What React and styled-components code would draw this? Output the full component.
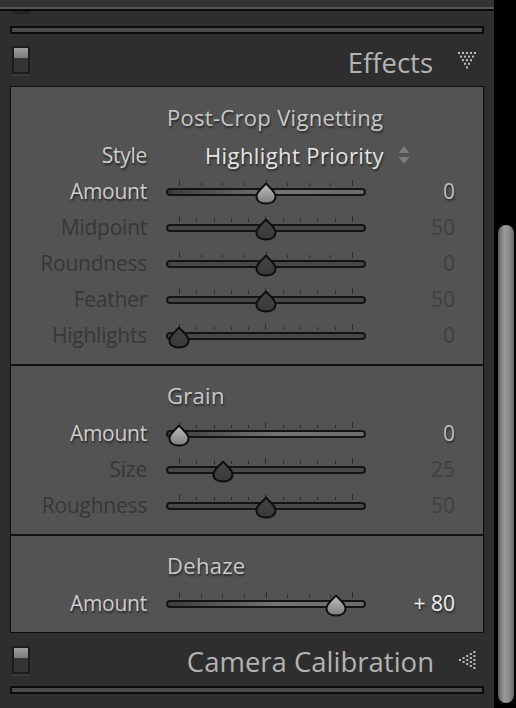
import React from "react";
import styled, { createGlobalStyle } from "styled-components";

const GlobalStyle = createGlobalStyle`
  html, body {
    margin: 0;
    padding: 0;
    background: #000;
  }
  body {
    font-family: "Open Sans", "Noto Sans", sans-serif;
  }
`;

const Page = styled.div`
  width: 516px;
  height: 708px;
  display: flex;
  overflow: hidden;
  background: #2e2e2e;
`;

const Main = styled.div`
  width: 494px;
  display: flex;
  flex-direction: column;
`;

const TopStrip = styled.div`
  height: 7px;
  background: #333;
  border-bottom: 2px solid #575757;
  box-shadow: 0 2px 0 #0a0a0a;
`;

const Stub = styled.div`
  width: 18px;
  height: 3px;
  margin: 2px 0 0 12px;
  background: #222;
`;

const Divider = styled.div`
  height: 4px;
  margin: ${({ $top }) => $top}px 10px 0 10px;
  background: #4a4a4a;
  border: 2px solid #0c0c0c;
`;

const Header = styled.div`
  height: ${({ $h }) => $h}px;
  display: flex;
  align-items: center;
  padding: 0 18px 0 12px;
`;

const Switch = styled.div`
  width: 14px;
  height: 24px;
  border: 2px solid #1c1c1c;
  background: #343434;
  box-shadow: 0 2px 0 #3a3a3a;
  display: flex;
  flex-direction: column;
`;

const SwitchTop = styled.div`
  height: 10px;
  background: linear-gradient(#a0a0a0, #7a7a7a);
`;

const HeaderTitle = styled.div`
  flex: 1;
  text-align: right;
  font-size: 27.5px;
  color: #b3b3b3;
  padding-right: 25px;
  line-height: 1;
  margin-top: 5px;
`;

const Panel = styled.div`
  margin: 0 10px;
  border: 1px solid #0c0c0c;
  background: #535353;
  display: flex;
  flex-direction: column;
`;

const Section = styled.div`
  padding: ${({ $first }) => ($first ? 15 : 14)}px 0 11px;
  border-top: ${({ $first }) => ($first ? "none" : "2px solid #111")};
`;

const Grid = styled.div`
  display: grid;
  grid-template-columns: 136px 200px 70px;
  column-gap: 19px;
  align-items: center;
`;

const TitleRow = styled(Grid)`
  height: 28px;
  margin-bottom: 7px;
`;

const SectionTitle = styled.div`
  grid-column: 2 / span 2;
  padding-left: 1px;
  font-size: 22px;
  letter-spacing: 0.3px;
  color: #c9c9c9;
  text-shadow: 1px 2px 2px #2a2a2a;
`;

const Row = styled(Grid)`
  height: 36px;
`;

const Label = styled.div`
  text-align: right;
  font-size: 21px;
  letter-spacing: -0.25px;
  color: ${({ $active }) => ($active ? "#cdcdcd" : "#373737")};
  text-shadow: ${({ $active }) => ($active ? "1px 2px 2px #262626" : "none")};
`;

const Value = styled.div`
  text-align: right;
  font-size: 21px;
  color: ${({ $tone }) => $tone};
  text-shadow: ${({ $tone }) => ($tone === "#404040" ? "none" : "1px 2px 2px #2a2a2a")};
`;

const StyleSelect = styled.div`
  grid-column: 2 / span 2;
  display: flex;
  align-items: center;
  gap: 14px;
  padding-left: 39px;
  font-size: 22px;
  letter-spacing: 0.4px;
  color: #e4e4e4;
  text-shadow: 1px 2px 2px #2a2a2a;
`;

const SliderBox = styled.div`
  position: relative;
  height: 36px;
  display: flex;
  flex-direction: column;
  padding-top: 7px;
  box-sizing: border-box;
`;

const Ticks = styled.div`
  height: 6px;
  padding: 0 13px;
  display: flex;
  justify-content: space-between;
  align-items: flex-end;
  margin-bottom: 2px;
`;

const Tick = styled.div`
  width: 1px;
  height: ${({ $tall }) => ($tall ? 6 : 3)}px;
  background: #2a2a2a;
`;

const Track = styled.div`
  height: 4px;
  border: 2px solid #141414;
  border-radius: 5px;
  background: ${({ $active }) =>
    $active
      ? "linear-gradient(to right, #3c3c3c, #747474 55%, #6c6c6c)"
      : "#474747"};
`;

const ThumbWrap = styled.svg`
  position: absolute;
  top: 9px;
`;

const Thumb = ({ fraction, active, id }) => (
  <ThumbWrap
    width="22"
    height="23"
    viewBox="0 0 22 23"
    style={{ left: 13 + fraction * 174 - 11 }}
  >
    <defs>
      <linearGradient id={id} x1="0" y1="0" x2="0" y2="1">
        <stop offset="0" stopColor={active ? "#c0c0c0" : "#444"} />
        <stop offset="1" stopColor={active ? "#7c7c7c" : "#393939"} />
      </linearGradient>
    </defs>
    <path
      d="M11 1.5 C13.5 5 20.5 9 20.5 14.5 C20.5 19 16.5 21.5 11 21.5 C5.5 21.5 1.5 19 1.5 14.5 C1.5 9 8.5 5 11 1.5 Z"
      fill={`url(#${id})`}
      stroke="#0e0e0e"
      strokeWidth="2"
      strokeLinejoin="round"
    />
  </ThumbWrap>
);

const Slider = ({ fraction, active, ticks, id }) => {
  const mid = Math.floor(ticks / 2);
  return (
    <SliderBox>
      <Ticks>
        {Array.from({ length: ticks }, (_, i) => (
          <Tick key={i} $tall={i === 0 || i === ticks - 1 || i === mid} />
        ))}
      </Ticks>
      <Track $active={active} />
      <Thumb fraction={fraction} active={active} id={id} />
    </SliderBox>
  );
};

const SliderRow = ({ label, value, fraction, active, ticks, tone, id }) => (
  <Row>
    <Label $active={active}>{label}</Label>
    <Slider fraction={fraction} active={active} ticks={ticks} id={id} />
    <Value $tone={tone}>{value}</Value>
  </Row>
);

const Arrows = () => (
  <svg width="12" height="18" viewBox="0 0 12 18">
    <path d="M6 0 L11.5 7 L0.5 7 Z" fill="#7a7a7a" />
    <path d="M6 18 L11.5 11 L0.5 11 Z" fill="#7a7a7a" />
  </svg>
);

const DotsDown = () => {
  const dots = [];
  [5, 4, 3, 2, 1].forEach((n, r) => {
    for (let i = 0; i < n; i++) {
      dots.push(<rect key={`${r}-${i}`} x={r * 2 + i * 4} y={r * 3.6} width="2" height="2" fill="#bdbdbd" />);
    }
  });
  return (
    <svg width="18" height="17" viewBox="0 0 18 17">
      {dots}
    </svg>
  );
};

const DotsLeft = () => {
  const dots = [];
  [1, 2, 3, 4, 5].forEach((n, c) => {
    for (let i = 0; i < n; i++) {
      dots.push(<rect key={`${c}-${i}`} x={c * 3.6} y={(5 - n) * 2 + i * 4} width="2" height="2" fill="#bdbdbd" />);
    }
  });
  return (
    <svg width="17" height="18" viewBox="0 0 17 18">
      {dots}
    </svg>
  );
};

const Scroll = styled.div`
  flex: 1;
  background: #000;
  padding: 225px 2px 0 4px;
`;

const Thumbbar = styled.div`
  height: 478px;
  border-radius: 8px;
  background: linear-gradient(to right, #5e5e5e, #9a9a9a 40%, #8c8c8c 70%, #666);
`;

const HIGH = "#bdbdbd";
const DIM = "#404040";

export default function App() {
  return (
    <>
      <GlobalStyle />
      <Page>
        <Main>
          <TopStrip />
          <Stub />
          <Divider $top={12} />
          <Header $h={52}>
            <Switch>
              <SwitchTop />
            </Switch>
            <HeaderTitle>Effects</HeaderTitle>
            <DotsDown />
          </Header>
          <Panel>
            <Section $first>
              <TitleRow>
                <SectionTitle>Post-Crop Vignetting</SectionTitle>
              </TitleRow>
              <Row>
                <Label $active>Style</Label>
                <StyleSelect>
                  Highlight Priority
                  <Arrows />
                </StyleSelect>
              </Row>
              <SliderRow id="v1" label="Amount" value="0" fraction={0.5} active ticks={9} tone={HIGH} />
              <SliderRow id="v2" label="Midpoint" value="50" fraction={0.5} ticks={11} tone={DIM} />
              <SliderRow id="v3" label="Roundness" value="0" fraction={0.5} ticks={9} tone={DIM} />
              <SliderRow id="v4" label="Feather" value="50" fraction={0.5} ticks={11} tone={DIM} />
              <SliderRow id="v5" label="Highlights" value="0" fraction={0} ticks={11} tone={DIM} />
            </Section>
            <Section>
              <TitleRow>
                <SectionTitle>Grain</SectionTitle>
              </TitleRow>
              <SliderRow id="g1" label="Amount" value="0" fraction={0} active ticks={11} tone={HIGH} />
              <SliderRow id="g2" label="Size" value="25" fraction={0.25} ticks={11} tone={DIM} />
              <SliderRow id="g3" label="Roughness" value="50" fraction={0.5} ticks={11} tone={DIM} />
            </Section>
            <Section>
              <TitleRow>
                <SectionTitle>Dehaze</SectionTitle>
              </TitleRow>
              <SliderRow id="d1" label="Amount" value="+ 80" fraction={0.9} active ticks={9} tone="#efefef" />
            </Section>
          </Panel>
          <Header $h={53}>
            <Switch>
              <SwitchTop />
            </Switch>
            <HeaderTitle>Camera Calibration</HeaderTitle>
            <DotsLeft />
          </Header>
          <Divider $top={0} />
        </Main>
        <Scroll>
          <Thumbbar />
        </Scroll>
      </Page>
    </>
  );
}
